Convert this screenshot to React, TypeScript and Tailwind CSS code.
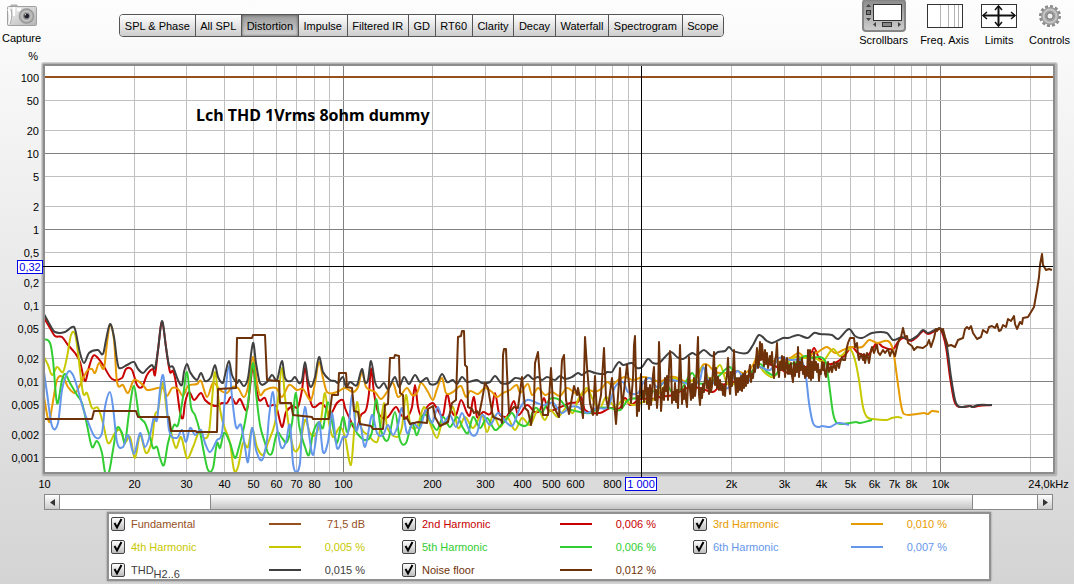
import { useState } from "react";

type Point = [number, number];

type Trace = {
  id: string;
  label: string;
  sub?: string;
  value: string;
  color: string;
  jagged?: boolean;
  points: string;
};

const TABS = [
  "SPL & Phase",
  "All SPL",
  "Distortion",
  "Impulse",
  "Filtered IR",
  "GD",
  "RT60",
  "Clarity",
  "Decay",
  "Waterfall",
  "Spectrogram",
  "Scope",
];

// plot area in chart units
const LEFT = 45;
const RIGHT = 1053;
const TOP = 66;
const BOTTOM = 472;

const xOf = (hz: number) => Math.round(44.5 + 298.6 * Math.log10(hz / 10) - 0.5) + 0.5;
const yOf = (pct: number) => Math.round(229.5 - 76 * Math.log10(pct) - 0.5) + 0.5;

const X_LINES = [
  20, 30, 40, 50, 60, 70, 80, 90, 100, 200, 300, 400, 500, 600, 700, 800, 900, 2000, 3000, 4000, 5000, 6000, 7000,
  8000, 9000, 10000, 20000,
];
const X_MAJOR = [100, 10000];
const X_LABELS: [number, string][] = [
  [10, "10"],
  [20, "20"],
  [30, "30"],
  [40, "40"],
  [50, "50"],
  [60, "60"],
  [70, "70"],
  [80, "80"],
  [100, "100"],
  [200, "200"],
  [300, "300"],
  [400, "400"],
  [500, "500"],
  [600, "600"],
  [800, "800"],
  [2000, "2k"],
  [3000, "3k"],
  [4000, "4k"],
  [5000, "5k"],
  [6000, "6k"],
  [7000, "7k"],
  [8000, "8k"],
  [10000, "10k"],
  [23000, "24,0kHz"],
];
const Y_LABELS: [number, string][] = [
  [100, "100"],
  [50, "50"],
  [20, "20"],
  [10, "10"],
  [5, "5"],
  [2, "2"],
  [1, "1"],
  [0.5, "0,5"],
  [0.2, "0,2"],
  [0.1, "0,1"],
  [0.05, "0,05"],
  [0.02, "0,02"],
  [0.01, "0,01"],
  [0.005, "0,005"],
  [0.002, "0,002"],
  [0.001, "0,001"],
];
const Y_MAJOR = [100, 10, 1, 0.1, 0.01, 0.001];

const TRACES: Trace[] = [
  {
    id: "fundamental",
    label: "Fundamental",
    value: "71,5 dB",
    color: "#96501e",
    jagged: true,
    points: "45,77 1053,77",
  },
  {
    id: "h2",
    label: "2nd Harmonic",
    value: "0,006 %",
    color: "#c80000",
    points:
      "44,318 50,328 55,336 62,337 68,345 75,353 80,362 85,381 89,367 93,356 97,357 103,365 112,379 122,378 126,369 132,370 137,385 142,387 147,375 153,369 155,375 158,350 162,322 167,355 170,372 173,371 176,383 180,412 183,418 185,403 189,392 194,400 201,393 205,400 212,405 217,406 222,403 227,403 231,397 236,404 240,399 247,410 250,387 253,367 256,387 259,400 265,398 268,406 276,406 282,427 286,412 293,406 298,407 302,390 305,368 309,395 313,407 321,403 326,408 330,415 337,403 343,400 345,408 349,417 356,430 361,415 366,410 369,393 371,368 374,393 378,412 383,418 388,417 396,407 401,415 407,417 412,407 415,385 418,407 422,417 427,407 433,403 436,407 443,415 447,394 451,410 456,415 461,400 467,413 470,415 474,397 477,417 483,412 491,413 495,393 499,413 505,417 508,415 514,401 518,415 527,405 535,412 540,410 544,398 548,410 558,408 570,403 578,402 581,397 585,410 600,413 610,408 620,408 625,398 630,405 640,399 652,399 660,397 673,395 687,388 700,388 713,392 720,386 730,383 747,378 755,368 760,358 767,363 777,367 790,373 798,363 807,367 810,358 814,348 819,358 828,364 837,362 845,355 852,347 858,353 868,355 877,343 883,347 893,349 898,342 903,338 911,341 917,337 923,331 928,334 937,330 941,330 946,347 950,377 954,400 957,406 963,407 970,406 973,407 978,406 992,405",
  },
  {
    id: "h3",
    label: "3rd Harmonic",
    value: "0,010 %",
    color: "#e69b00",
    points:
      "44,397 49,422 52,407 57,380 63,377 68,387 75,393 80,385 87,371 92,369 95,373 99,363 104,368 107,343 110,325 114,340 117,382 123,385 128,393 134,380 143,385 147,390 158,388 163,388 167,396 172,388 178,389 183,396 188,386 197,384 201,381 207,397 213,383 220,390 227,393 232,387 238,388 244,397 248,387 253,357 257,383 260,395 265,390 276,388 282,397 289,385 297,390 303,389 311,400 315,383 319,362 323,378 327,392 337,392 345,388 353,392 358,387 362,372 366,387 375,392 381,399 387,392 393,383 398,397 407,388 412,395 417,393 421,383 428,392 433,400 437,389 442,378 446,393 453,392 461,386 466,397 470,391 478,394 485,388 492,392 497,397 503,393 510,390 517,385 520,393 528,384 532,395 538,388 545,395 552,392 560,396 567,388 575,393 582,395 588,390 595,392 602,388 607,382 612,385 618,380 625,377 633,380 643,377 652,379 660,382 667,378 675,377 687,382 697,377 703,365 708,365 715,372 727,373 737,371 745,373 753,365 760,350 767,358 777,362 790,358 799,353 805,358 810,355 818,352 827,347 835,353 843,350 850,347 862,347 869,340 877,343 888,341 893,350 897,377 901,405 904,414 917,414 924,413 928,414 932,411 939,412",
  },
  {
    id: "h4",
    label: "4th Harmonic",
    value: "0,005 %",
    color: "#c8c800",
    points:
      "44,357 48,365 52,375 57,367 63,372 67,357 71,335 75,334 78,353 83,393 87,393 92,408 98,408 103,423 108,443 115,433 120,430 125,442 130,437 135,458 140,435 146,453 152,440 155,415 158,410 163,383 167,413 171,432 176,448 181,437 187,458 193,447 200,430 204,438 209,432 212,400 215,372 219,403 223,423 230,443 234,470 238,467 243,443 248,447 252,428 257,447 263,455 268,443 275,423 278,400 282,368 285,397 289,427 294,450 300,445 305,420 310,433 315,435 321,420 325,393 329,423 333,437 340,427 345,437 351,465 354,433 357,402 361,427 368,435 377,442 380,430 384,403 387,427 397,437 402,427 406,395 410,423 417,427 424,407 430,423 437,438 442,423 447,423 453,407 458,428 465,417 473,428 482,415 487,432 493,415 500,427 507,417 515,430 522,418 530,425 538,410 545,420 550,410 558,417 567,407 573,413 578,400 587,388 593,400 600,408 606,397 615,407 623,400 633,405 643,402 653,400 663,388 673,378 683,383 693,380 703,367 710,380 720,365 727,383 737,383 747,380 757,365 765,373 773,377 783,367 795,357 805,358 813,357 823,361 833,349 840,356 850,349 855,360 859,380 863,407 867,417 873,419 887,420 892,418 898,417 902,418",
  },
  {
    id: "h5",
    label: "5th Harmonic",
    value: "0,006 %",
    color: "#32cd32",
    points:
      "44,339 50,343 53,360 57,403 62,380 65,374 70,383 77,395 82,403 87,425 92,447 97,441 102,453 105,472 109,472 113,450 117,428 122,433 125,443 129,413 134,386 139,415 145,423 150,437 153,448 157,447 160,458 164,465 168,443 174,425 178,425 183,397 187,372 191,407 195,415 200,432 204,453 208,470 213,468 217,443 220,448 224,433 230,443 235,458 239,447 244,427 248,403 253,363 256,393 260,425 265,443 268,453 272,453 277,433 282,438 287,442 292,423 296,393 299,425 305,447 309,455 313,433 319,422 323,428 328,402 333,427 337,443 343,417 347,432 352,423 357,433 365,440 372,432 376,399 381,430 388,440 395,412 400,440 406,443 412,423 417,435 423,415 430,420 437,430 443,417 450,427 457,417 463,428 468,433 473,417 480,428 487,418 495,430 502,424 506,420 512,413 518,423 527,425 535,408 542,412 550,399 560,400 567,408 580,412 590,413 600,408 610,408 620,410 628,400 637,398 647,393 657,390 665,382 672,392 682,388 692,373 698,383 710,382 720,375 730,367 737,380 747,377 760,364 767,372 775,375 783,365 795,363 805,356 812,358 820,357 826,363 829,383 833,413 837,423 850,423 856,422 860,423 872,420",
  },
  {
    id: "h6",
    label: "6th Harmonic",
    value: "0,007 %",
    color: "#6496eb",
    points:
      "44,372 47,393 52,426 58,423 62,390 68,372 73,375 78,390 83,408 88,422 95,437 102,433 105,407 110,392 113,407 117,442 123,447 128,435 134,454 140,433 145,447 150,435 154,417 157,420 160,390 163,375 166,397 169,430 177,438 182,430 186,442 190,428 195,435 201,430 205,443 210,452 217,440 222,433 225,397 229,366 232,397 236,427 241,425 245,447 248,462 252,428 256,450 262,460 267,440 269,417 273,392 276,420 281,447 286,442 290,425 293,463 296,472 300,463 302,430 305,407 308,427 313,455 319,422 323,452 328,442 332,413 337,448 343,437 348,433 352,395 356,430 360,423 365,447 372,415 377,433 383,435 388,425 393,435 398,425 402,408 407,433 413,423 420,428 426,410 432,423 438,407 443,423 450,415 456,427 462,413 467,425 472,435 477,433 482,415 490,425 498,413 507,423 513,425 520,408 527,400 537,403 543,405 553,403 562,413 570,407 578,407 587,413 597,408 608,407 615,387 623,382 628,392 638,393 643,383 650,378 657,387 667,380 682,382 692,385 700,380 703,367 708,380 720,385 728,388 737,371 745,380 750,380 757,367 770,370 779,358 790,360 802,362 806,377 809,403 813,423 818,427 822,426 830,427 838,423 849,425",
  },
  {
    id: "thd",
    label: "THD",
    sub: "H2..6",
    value: "0,015 %",
    color: "#404040",
    points:
      "44,314 50,325 55,332 65,332 72,327 75,329 80,353 84,363 89,353 98,350 103,354 106,340 110,324 114,337 117,360 119,368 127,365 134,362 138,369 143,373 147,369 152,365 155,368 158,350 162,321 166,347 169,365 173,367 178,380 182,385 184,372 187,364 190,372 197,380 201,373 205,381 211,377 215,365 218,377 223,383 225,375 229,361 232,375 237,383 239,380 244,386 248,378 253,343 256,363 260,383 267,382 272,375 277,380 282,361 285,378 291,381 295,377 299,383 302,380 305,362 308,380 311,387 315,377 319,357 323,372 330,380 335,381 338,383 343,377 346,387 350,382 357,385 362,369 365,382 368,380 371,361 375,382 379,388 384,383 388,389 395,377 399,387 404,377 409,384 415,375 420,382 427,378 430,384 437,383 442,374 447,382 453,380 457,384 462,377 467,382 477,380 482,383 490,382 495,376 501,383 509,383 515,378 523,379 528,375 533,379 538,377 542,380 547,377 555,380 560,376 565,379 572,377 578,373 582,375 588,371 595,373 605,374 607,372 612,372 615,367 619,362 623,365 632,363 637,368 642,367 648,359 653,363 659,363 665,357 671,352 677,357 683,359 692,353 697,355 704,350 712,356 718,352 725,351 729,347 733,351 747,353 753,345 759,335 767,341 772,343 783,338 788,338 798,335 808,338 814,333 820,334 832,335 838,339 849,329 855,336 862,338 872,333 887,333 893,340 902,337 910,340 917,336 923,330 928,333 937,329 942,330 947,347 951,377 955,400 958,406 963,407 970,406 973,407 978,405 992,405",
  },
  {
    id: "noise",
    label: "Noise floor",
    value: "0,012 %",
    color: "#6e320a",
    jagged: true,
    points:
      "44,419 92,419 94,411 136,411 138,417 169,417 171,431 195,431 197,432 217,432 218,389 236,388 237,338 252,338 253,335 265,335 267,380 279,381 280,403 291,403 293,415 312,417 313,419 329,419 332,395 338,395 339,373 346,373 347,387 352,388 354,411 358,412 360,424 371,426 373,429 383,429 385,405 388,404 390,358 394,358 395,355 399,356 400,393 403,395 404,419 407,418 410,424 418,422 427,423 428,409 433,406 435,417 440,426 448,422 452,403 456,400 458,337 461,336 462,331 464,331 465,365 467,367 468,407 472,409 474,413 477,411 479,415 482,400 485,383 488,388 490,400 493,417 501,420 502,423 503,355 504,349 506,349 507,373 509,413 514,407 518,408 522,377 525,408 528,411 531,425 534,403 535,363 538,352 541,393 543,415 548,415 551,368 553,405 559,417 562,360 564,355 566,400 569,414 573,392 574,386 577,395 578,388 581,403 583,418 585,337 587,367 590,403 593,415 595,376 597,415 601,395 604,348 606,398 608,408 612,378 616,424 620,368 622,408 627,365 631,403 633,378 634,345 635,336 636,380 637,416 638,396 639,411 640,390 641,374 642,398 643,391 644,402 645,382 646,378 647,404 648,388 649,409 650,385 651,405 652,392 653,375 654,367 655,400 656,390 657,408 658,396 659,342 660,370 661,411 662,398 663,388 664,400 665,378 666,391 667,376 668,400 669,370 670,351 671,360 672,403 673,392 674,400 675,383 676,402 677,390 678,408 679,380 680,345 681,375 682,404 683,390 684,399 685,386 686,400 687,407 688,385 689,357 690,390 691,400 692,384 693,398 694,378 695,396 696,388 697,360 698,337 699,395 700,405 701,388 702,398 703,384 704,392 705,378 706,365 707,388 708,381 709,394 710,378 711,392 712,386 713,370 714,352 715,385 716,368 717,388 718,377 719,390 720,380 721,390 722,384 723,395 724,386 725,396 726,382 727,375 728,358 729,382 730,394 731,372 732,386 733,370 734,350 735,380 736,395 737,378 738,392 739,378 740,390 741,376 742,391 743,374 744,388 745,371 746,386 747,376 748,383 749,372 750,365 751,382 752,374 753,378 754,365 755,372 756,360 757,348 758,368 759,364 760,342 761,360 762,344 763,356 764,366 765,350 766,364 767,353 768,368 770,356 771,364 772,352 773,372 774,378 775,360 776,356 777,343 778,370 779,377 780,362 781,370 782,356 783,370 784,357 785,377 786,364 787,358 788,374 789,365 790,374 791,363 792,376 793,382 794,362 795,376 796,364 797,372 798,347 799,377 800,362 801,370 802,358 803,374 804,366 805,378 806,368 807,376 808,350 809,378 810,350 811,380 812,362 813,378 814,352 815,370 816,362 817,372 818,364 819,381 820,370 821,374 822,362 823,370 824,364 825,374 826,377 827,366 828,362 829,372 831,366 832,372 834,362 835,368 836,370 837,363 838,363 839,368 840,363 842,357 843,360 845,360 847,347 848,343 850,338 854,338 855,347 857,343 858,355 859,360 861,354 863,360 864,354 865,363 867,353 868,358 869,363 871,350 872,347 874,353 876,347 877,345 878,352 880,355 883,350 885,353 888,349 890,356 892,350 895,356 897,347 899,340 901,337 903,328 905,337 907,336 908,343 912,346 914,350 917,347 923,348 927,345 929,340 931,347 934,338 936,329 937,331 939,328 942,331 943,329 945,337 948,346 951,345 955,347 958,340 963,338 965,329 967,327 969,329 971,326 973,333 977,339 981,337 983,330 987,333 989,327 992,326 995,328 997,324 999,331 1001,330 1003,325 1006,327 1008,319 1011,321 1014,316 1015,324 1017,329 1020,322 1022,324 1023,318 1028,317 1031,312 1034,307 1037,290 1039,277 1040,265 1042,254 1043,265 1046,270 1049,269 1052,270",
  },
];

function parse(points: string): Point[] {
  return points.split(" ").map((p) => p.split(",").map(Number) as Point);
}

// Catmull-Rom through the samples, written as cubic segments
function toPath(trace: Trace) {
  const p = parse(trace.points);
  if (trace.jagged) return "M" + p.map(([x, y]) => `${x} ${y}`).join("L");
  let d = `M${p[0][0]} ${p[0][1]}`;
  for (let i = 0; i < p.length - 1; i++) {
    const a = p[i - 1] ?? p[i];
    const b = p[i];
    const c = p[i + 1];
    const e = p[i + 2] ?? c;
    const dx = (c[0] - b[0]) / 3;
    const s1 = (c[1] - a[1]) / (c[0] - a[0] || 1);
    const s2 = (e[1] - b[1]) / (e[0] - b[0] || 1);
    d += `C${b[0] + dx} ${b[1] + s1 * dx} ${c[0] - dx} ${c[1] - s2 * dx} ${c[0]} ${c[1]}`;
  }
  return d;
}

function Chart({ hidden }: { hidden: string[] }) {
  return (
    <svg
      viewBox="0 48 1074 444"
      className="block h-auto w-full font-['Liberation_Sans',sans-serif] text-[11px]"
      role="img"
      aria-label="Distortion"
    >
      <defs>
        <clipPath id="plot">
          <rect x={LEFT} y={TOP} width={RIGHT - LEFT} height={BOTTOM - TOP} />
        </clipPath>
      </defs>
      <rect x="41" y="62" width="1017" height="415" rx="3" fill="#d0d0d0" />
      <rect x="42" y="63" width="1015" height="413" rx="2" fill="#b4b4b4" />
      <rect x="43" y="64" width="1012" height="410" rx="1" fill="#8c8c8c" />
      <rect x={LEFT} y={TOP} width={RIGHT - LEFT} height={BOTTOM - TOP} fill="#fff" />

      <g shapeRendering="crispEdges">
        {X_LINES.map((hz) => (
          <line
            key={hz}
            x1={xOf(hz)}
            x2={xOf(hz)}
            y1={TOP}
            y2={BOTTOM}
            stroke={X_MAJOR.includes(hz) ? "#808080" : "#c0c0c0"}
          />
        ))}
        {Y_LABELS.map(([v]) => (
          <line
            key={v}
            x1={LEFT}
            x2={RIGHT}
            y1={yOf(v)}
            y2={yOf(v)}
            stroke={Y_MAJOR.includes(v) ? "#808080" : "#c0c0c0"}
          />
        ))}
      </g>

      <text x="196" y="121" className="font-['Noto_Sans',sans-serif] text-[16px] font-bold">
        Lch THD 1Vrms 8ohm dummy
      </text>

      <g clipPath="url(#plot)" fill="none" strokeWidth="2" strokeLinejoin="round">
        {TRACES.filter((t) => !hidden.includes(t.id)).map((t) => (
          <path key={t.id} d={toPath(t)} stroke={t.color} />
        ))}
      </g>

      <g stroke="#000" shapeRendering="crispEdges">
        <line x1="43" x2={RIGHT} y1="266.5" y2="266.5" />
        <line x1="641.5" x2="641.5" y1={TOP} y2="477" />
      </g>

      <g textAnchor="end">
        <text x="38" y="60">
          %
        </text>
        {Y_LABELS.map(([v, label]) => (
          <text key={label} x="39" y={yOf(v) + 4.5}>
            {label}
          </text>
        ))}
      </g>
      <g textAnchor="middle">
        {X_LABELS.map(([hz, label]) => (
          <text key={label} x={xOf(hz)} y="488">
            {label}
          </text>
        ))}
      </g>

      <g fill="#fff" stroke="#0000e6" shapeRendering="crispEdges">
        <rect x="17.5" y="260.5" width="25" height="13" />
        <rect x="625.5" y="477.5" width="31" height="13" />
      </g>
      <g textAnchor="middle" fill="#0000e6">
        <text x="30" y="271">
          0,32
        </text>
        <text x="641" y="488">
          1 000
        </text>
      </g>
    </svg>
  );
}

function CameraIcon() {
  return (
    <svg width="30" height="23" viewBox="0 0 30 23">
      <defs>
        <linearGradient id="body" x1="0" x2="1" y1="0" y2="1">
          <stop offset="0" stopColor="#f4f4f4" />
          <stop offset="1" stopColor="#b4b4b4" />
        </linearGradient>
        <radialGradient id="lens">
          <stop offset="0" stopColor="#222" />
          <stop offset="0.25" stopColor="#444" />
          <stop offset="0.4" stopColor="#8c8c8c" />
          <stop offset="0.6" stopColor="#c8c8c8" />
          <stop offset="1" stopColor="#8e8e8e" />
        </radialGradient>
      </defs>
      <path d="M4 2V1h6v1" fill="#bbb" stroke="#aaa" />
      <rect x="0.5" y="2.5" width="29" height="19" rx="1" fill="url(#body)" stroke="#a0a0a0" />
      <path d="M1 5q4 6 1 15M7 3v9" fill="none" stroke="#fff" strokeWidth="2" />
      <path d="M4 5q2 6-1 15" fill="none" stroke="#aaa" />
      <rect x="10" y="4" width="4" height="3" fill="#fff" />
      <circle cx="19.5" cy="12" r="7.5" fill="url(#lens)" stroke="#909090" strokeWidth="0.5" />
      <circle cx="20" cy="12" r="2" fill="#1c1c2c" />
      <path d="M18 10.5l1 .5" stroke="#fff" />
    </svg>
  );
}

function ScrollbarsIcon() {
  return (
    <svg width="44" height="32" viewBox="0 0 44 32">
      <defs>
        <linearGradient id="pressed" x1="0" x2="0" y1="0" y2="1">
          <stop offset="0" stopColor="#8c8c8c" />
          <stop offset="1" stopColor="#cfcfcf" />
        </linearGradient>
      </defs>
      <rect x="1" y="0" width="42" height="31" rx="3" fill="url(#pressed)" stroke="#858585" strokeWidth="2" />
      <rect x="11.5" y="4.5" width="28" height="16" fill="#fff" stroke="#333" />
      <path d="M4 7l2.500-3L9 7zM4 18l2.500 3L9 18zM14 22v5l-3-2.500zM36 22v5l3-2.500z" fill="#444" />
      <rect x="4.5" y="10.5" width="4" height="4" fill="#777" stroke="#333" />
      <rect x="20.5" y="22.5" width="9" height="4" fill="#888" stroke="#333" />
    </svg>
  );
}

function FreqAxisIcon() {
  return (
    <svg width="36" height="24" viewBox="0 0 36 24">
      <rect x="0.5" y="0.5" width="35" height="23" fill="#fff" stroke="#333" />
      <path d="M13.500 1v22M21.500 1v22M27.500 1v22M31.500 1v22" stroke="#b4b4b4" />
    </svg>
  );
}

function LimitsIcon() {
  return (
    <svg width="36" height="24" viewBox="0 0 36 24" fill="none" stroke="#111">
      <rect x="0.5" y="0.5" width="35" height="23" fill="#fff" stroke="#333" />
      <path d="M2 11.500h32M17.500 2v20" strokeWidth="2" />
      <path d="M6 8l-4 3.500L6 15M30 8l4 3.500L30 15M14 6l3.500-4L21 6M14 18l3.500 4L21 18" strokeWidth="1.5" />
    </svg>
  );
}

function GearIcon() {
  return (
    <svg width="24" height="24" viewBox="0 0 24 24" fill="none">
      <circle cx="12" cy="12" r="9.5" stroke="#8a8a8a" strokeWidth="3" pathLength="24" strokeDasharray="1.200 0.800" />
      <circle cx="12" cy="12" r="6.5" stroke="#9c9c9c" strokeWidth="5" />
      <circle cx="12" cy="12" r="6.5" stroke="#c6c6c6" strokeWidth="2" />
      <circle cx="12" cy="12" r="4" fill="#808080" />
      <circle cx="12" cy="12" r="2.5" fill="#f2f2f2" />
    </svg>
  );
}

const TOOLS = [
  { label: "Scrollbars", icon: <ScrollbarsIcon /> },
  { label: "Freq. Axis", icon: <FreqAxisIcon /> },
  { label: "Limits", icon: <LimitsIcon /> },
  { label: "Controls", icon: <GearIcon /> },
];

function LegendItem({ trace, checked, onToggle }: { trace: Trace; checked: boolean; onToggle: () => void }) {
  return (
    <div className="flex h-[19px] items-center" style={{ color: trace.color }}>
      <label className="flex w-[158px] items-center gap-1.5">
        <span className="relative size-3.5">
          <input
            type="checkbox"
            checked={checked}
            onChange={onToggle}
            className="peer block size-3.5 appearance-none rounded-xs border border-[#444] bg-linear-to-b from-white to-[#bdbdbd]"
          />
          <svg viewBox="0 0 14 14" className="pointer-events-none absolute inset-0 hidden size-3.5 peer-checked:block">
            <path d="M3.500 6l2.500 4.500L10.500 2" fill="none" stroke="#000" strokeWidth="2" />
          </svg>
        </span>
        <span>
          {trace.label}
          {trace.sub ? <sub className="-bottom-1 text-[11px]">{trace.sub}</sub> : null}
        </span>
      </label>
      <span className="h-0.5 w-8" style={{ backgroundColor: trace.color }} />
      <span className="w-16 text-right">{trace.value}</span>
    </div>
  );
}

export default function App() {
  const [tab, setTab] = useState("Distortion");
  const [hidden, setHidden] = useState<string[]>([]);

  const toggle = (id: string) =>
    setHidden((prev) => (prev.includes(id) ? prev.filter((h) => h !== id) : [...prev, id]));

  return (
    <div className="min-h-screen bg-linear-to-b from-[#fdfdfd] to-[#d4d4d4] font-['Liberation_Sans',sans-serif] text-[11px] leading-4 text-black">
      <header className="flex h-12 items-start pr-1 pl-0.5">
        <button className="flex flex-col items-center gap-0.5 pt-1">
          <CameraIcon />
          <span className="pt-px">Capture</span>
        </button>
        <nav className="mt-3.5 ml-[78px] flex h-[23px] w-[605px] overflow-hidden rounded border border-[#555]">
          {TABS.map((name) => (
            <button
              key={name}
              onClick={() => setTab(name)}
              className={
                name === tab
                  ? "flex-auto border-r border-[#555] bg-linear-to-b from-[#999] to-[#d4d4d4] shadow-[inset_0_0_3px_#555] last:border-r-0"
                  : "flex-auto border-r border-[#555] bg-linear-to-b from-white to-[#cdcdcd] last:border-r-0"
              }
            >
              {name}
            </button>
          ))}
        </nav>
        <div className="ml-auto flex gap-3">
          {TOOLS.map((tool) => (
            <button key={tool.label} className="flex flex-col items-center">
              <span className="flex h-8 items-center">{tool.icon}</span>
              <span>{tool.label}</span>
            </button>
          ))}
        </div>
      </header>

      <Chart hidden={hidden} />

      <div className="mt-0.5 mr-[21px] ml-11 flex h-4 border border-[#888] bg-white">
        <button
          aria-label="Scroll left"
          className="flex w-[15px] items-center justify-center border-r border-[#888] bg-linear-to-b from-white to-[#ccc]"
        >
          <svg width="5" height="7" viewBox="0 0 5 7">
            <path d="M5 0v7L0 3.500z" fill="#333" />
          </svg>
        </button>
        <div className="flex flex-1">
          <div className="w-[15.4%]" />
          <button
            aria-label="Frequency range"
            className="flex-1 border-x border-[#888] bg-linear-to-b from-white to-[#c4c4c4]"
          />
          <div className="w-[6.6%]" />
        </div>
        <button
          aria-label="Scroll right"
          className="flex w-[15px] items-center justify-center border-l border-[#888] bg-linear-to-b from-white to-[#ccc]"
        >
          <svg width="5" height="7" viewBox="0 0 5 7">
            <path d="M0 0v7l5-3.500z" fill="#333" />
          </svg>
        </button>
      </div>

      <section className="mt-0.5 mr-[83px] ml-[107px] grid grid-cols-3 gap-y-1 border-2 border-[#909090] bg-white pr-[5px] pl-0.5 shadow-[0_0_2px_#888]">
        {TRACES.map((t) => (
          <LegendItem key={t.id} trace={t} checked={!hidden.includes(t.id)} onToggle={() => toggle(t.id)} />
        ))}
      </section>
    </div>
  );
}
